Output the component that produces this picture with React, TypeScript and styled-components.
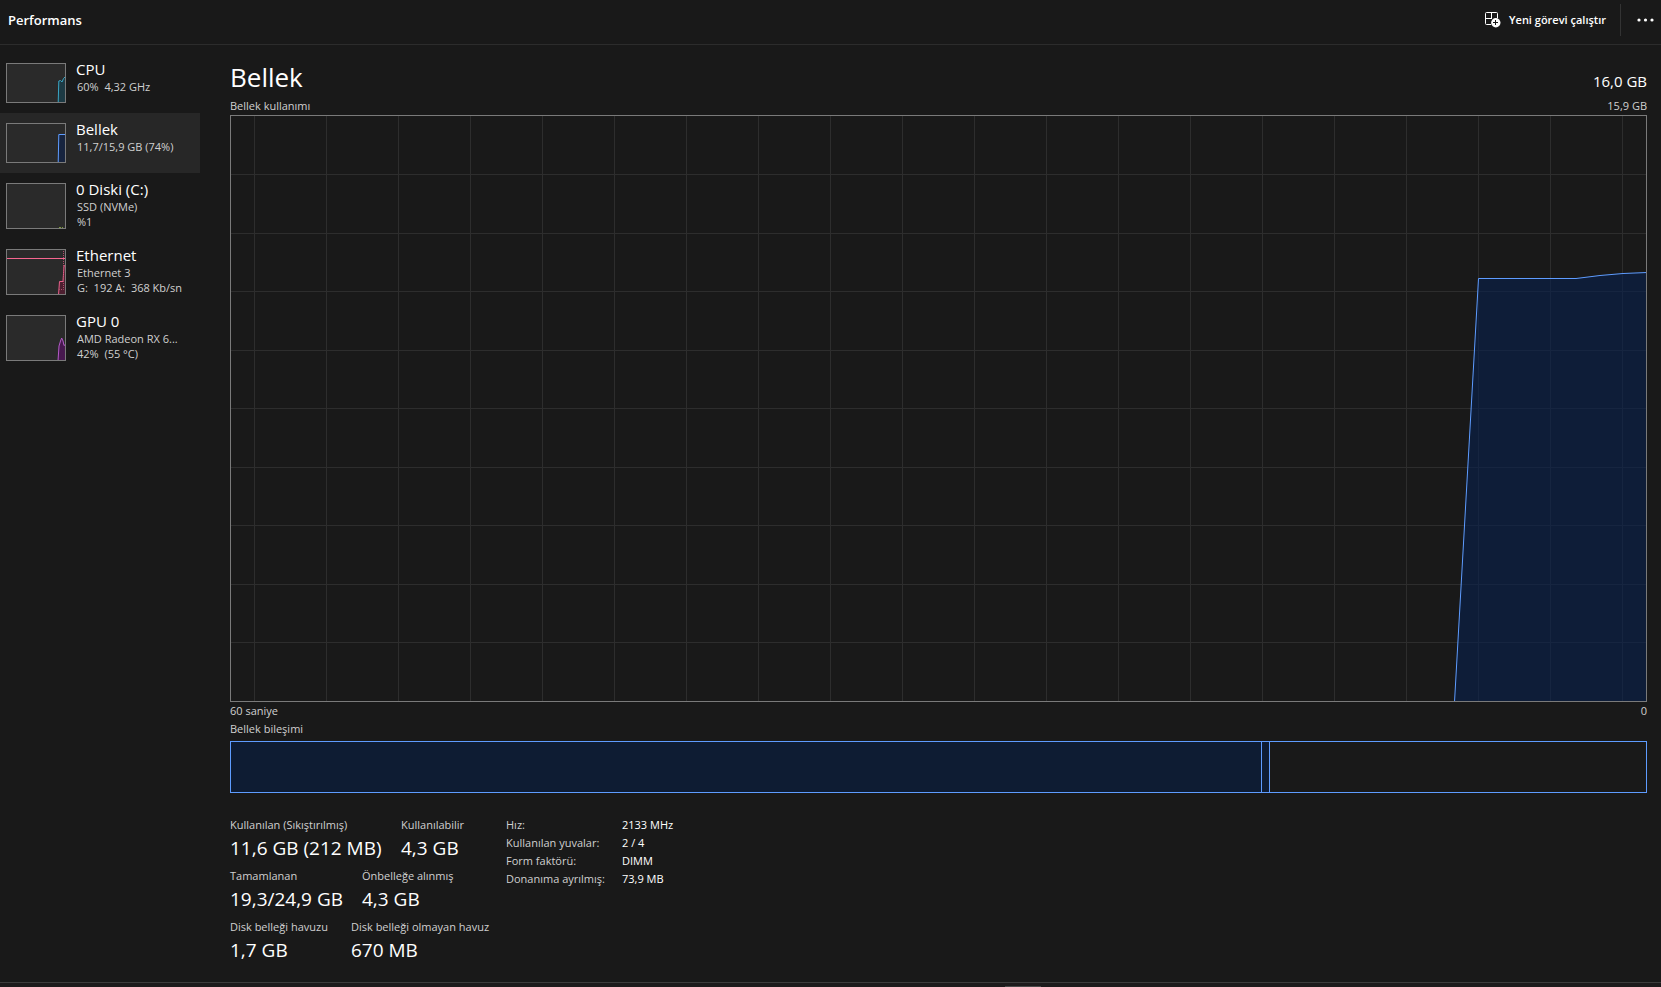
import React from "react";
import styled, { createGlobalStyle } from "styled-components";

const GlobalStyle = createGlobalStyle`
  *, *::before, *::after { box-sizing: border-box; }
  body {
    margin: 0;
    background: #191919;
    color: #ffffff;
    font-family: "Open Sans", "Noto Sans", sans-serif;
    font-size: 12px;
    line-height: 16px;
  }
  button { font: inherit; color: inherit; background: none; border: 0; padding: 0; margin: 0; }
  h1, h2, p, dl, dd, dt, ul { margin: 0; padding: 0; font-weight: 400; }
`;

const Page = styled.div`
  min-height: 100vh;
  display: flex;
  flex-direction: column;
`;

const Header = styled.header`
  display: flex;
  align-items: center;
  height: 45px;
  padding: 0 0 4px 8px;
  border-bottom: 1px solid #2c2c2c;
`;

const PageTitle = styled.h1`
  flex: 1;
  font-size: 13px;
  font-weight: 600;
`;

const RunTask = styled.button`
  display: flex;
  align-items: center;
  gap: 8px;
  padding: 0 14px 0 8px;
  height: 32px;
  font-size: 11px;
  font-weight: 600;
`;

const HeaderRule = styled.span`
  width: 1px;
  height: 32px;
  background: #333333;
`;

const MoreButton = styled.button`
  display: grid;
  place-items: center;
  width: 40px;
  height: 32px;
  padding-left: 8px;
`;

const Body = styled.div`
  flex: 1;
  display: flex;
`;

const Sidebar = styled.nav`
  flex: none;
  width: 200px;
  padding-top: 8px;
`;

const SideItem = styled.button<{ $active?: boolean }>`
  display: flex;
  gap: 10px;
  width: 100%;
  padding: 10px 6px;
  text-align: left;
  background: ${(p) => (p.$active ? "#272727" : "transparent")};
`;

const Thumb = styled.svg`
  flex: none;
  border: 1px solid #7a7a7a;
  background: #2a2a2a;
`;

const SideText = styled.span`
  display: flex;
  flex-direction: column;
  min-width: 0;
  margin-top: -2px;
`;

const SideName = styled.span`
  font-size: 15px;
  line-height: 16px;
  margin-bottom: 2px;
`;

const SideLine = styled.span`
  padding-left: 1px;
  font-size: 11px;
  line-height: 15px;
  color: #d0d0d0;
  white-space: pre;
`;

const Main = styled.main`
  flex: 1;
  min-width: 0;
  display: flex;
  flex-direction: column;
  padding: 12px 14px 17px 30px;
`;

const TitleRow = styled.div`
  display: flex;
  align-items: baseline;
  justify-content: space-between;
  height: 40px;
  line-height: 40px;
`;

const Title = styled.h2`
  font-size: 26px;
`;

const Capacity = styled.span`
  font-size: 15px;
`;

const Caption = styled.div`
  display: flex;
  justify-content: space-between;
  font-size: 11px;
  line-height: 18px;
  color: #d0d0d0;
`;

const Chart = styled.svg`
  display: block;
  flex: 1 1 240px;
  width: 100%;
  min-height: 240px;
  border: 1px solid #7a7a7a;
`;

const Composition = styled.div`
  display: flex;
  height: 52px;
  margin-top: 3px;
  border: 1px solid #5e9cff;
`;

const Segment = styled.div<{ $share: number; $filled?: boolean }>`
  flex: ${(p) => p.$share} 1 0;
  background: ${(p) => (p.$filled ? "#0e1c33" : "transparent")};
  & + & { border-left: 1px solid #5e9cff; }
`;

const Details = styled.div`
  display: flex;
  margin-top: 23px;
`;

const StatRows = styled.div`
  width: 276px;
  display: flex;
  flex-direction: column;
  gap: 4px;
`;

const StatRow = styled.dl`
  display: flex;
  white-space: nowrap;
`;

const Stat = styled.div<{ $width?: number }>`
  flex: none;
  width: ${(p) => (p.$width ? `${p.$width}px` : "auto")};
`;

const StatLabel = styled.dt`
  font-size: 11px;
  line-height: 17px;
  color: #d0d0d0;
`;

const StatValue = styled.dd`
  font-size: 19px;
  line-height: 30px;
`;

const Specs = styled.table`
  align-self: flex-start;
  border-collapse: collapse;
  th, td {
    padding: 0;
    height: 18px;
    font-size: 11px;
    line-height: 18px;
    font-weight: 400;
    text-align: left;
    white-space: nowrap;
  }
  th { width: 116px; color: #d0d0d0; }
`;

const Footer = styled.footer`
  display: flex;
  align-items: flex-end;
  height: 5px;
  padding-left: 60.5%;
  border-top: 1px solid #3c3c3c;
  background: #1d1b1c;
`;

type Device = {
  name: string;
  lines: string[];
  height: number;
  active?: boolean;
  graph: React.ReactNode;
};

const devices: Device[] = [
  {
    name: "CPU",
    lines: ["60%  4,32 GHz"],
    height: 40,
    graph: (
      <path d="M51.2 39L51.8 17L53.5 16.5L55 18L56.5 14.5L58.5 12.5V39" fill="#1c3a44" stroke="#3aa5c4" />
    ),
  },
  {
    name: "Bellek",
    lines: ["11,7/15,9 GB (74%)"],
    height: 40,
    active: true,
    graph: <path d="M51.2 39L51.8 10.5H59V39" fill="#17243f" stroke="#5e9cff" />,
  },
  {
    name: "0 Diski (C:)",
    lines: ["SSD (NVMe)", "%1"],
    height: 46,
    graph: <path d="M52 43.5H54M55 43.5H56" fill="none" stroke="#7d9a3c" />,
  },
  {
    name: "Ethernet",
    lines: ["Ethernet 3", "G:  192 A:  368 Kb/sn"],
    height: 46,
    graph: (
      <>
        <path d="M51.5 45L52.5 31.5H56L57 16L59 15V45" fill="#4d1f30" stroke="#e8608a" />
        <path d="M52 39.5H56.5V0" fill="none" stroke="#b34d6c" strokeDasharray="1 1" />
        <path d="M0 8.5H58" fill="none" stroke="#f5668f" />
      </>
    ),
  },
  {
    name: "GPU 0",
    lines: ["AMD Radeon RX 6...", "42%  (55 °C)"],
    height: 46,
    graph: (
      <path d="M51 45L52 30L53.5 25L54.7 22L56 25L57 29.5L59 28V45" fill="#47184f" stroke="#b45ac8" />
    ),
  },
];

const columns = Array.from({ length: 20 }, (_, i) => 23 + 72 * i);
const rows = Array.from({ length: 9 }, (_, i) => Math.floor(58.5 * (i + 1)));
const usage = "M1223.5 586L1247.5 162.5H1345L1369 159.5L1392 157.5L1416 156.5";

function MemoryChart() {
  return (
    <Chart viewBox="0 0 1415 585" preserveAspectRatio="none" role="img" aria-label="Bellek kullanımı">
      <g stroke="#2d2d2d">
        {columns.map((x) => (
          <path key={x} d={`M${x + 0.5} 0V585`} vectorEffect="non-scaling-stroke" />
        ))}
        {rows.map((y) => (
          <path key={y} d={`M0 ${y + 0.5}H1415`} vectorEffect="non-scaling-stroke" />
        ))}
      </g>
      <path d={`${usage}V586Z`} fill="#06204d" fillOpacity="0.6" />
      <path d={usage} fill="none" stroke="#5e9cff" vectorEffect="non-scaling-stroke" />
    </Chart>
  );
}

function RunTaskIcon() {
  return (
    <svg width="16" height="16" viewBox="0 0 16 16" fill="none" aria-hidden="true">
      <path
        d="M6 12.5H1.5A1 1 0 0 1 .5 11.5V1.5A1 1 0 0 1 1.5 .5H11.5A1 1 0 0 1 12.5 1.5V6M6.5 .5V6.5M.5 6.5H7"
        stroke="#fff"
      />
      <circle cx="10.8" cy="10.8" r="4.7" fill="#fff" />
      <path d="M10.5 8V13M8 10.5H13" stroke="#191919" />
    </svg>
  );
}

const stats: { label: string; value: string; width?: number }[][] = [
  [
    { label: "Kullanılan (Sıkıştırılmış)", value: "11,6 GB (212 MB)", width: 171 },
    { label: "Kullanılabilir", value: "4,3 GB" },
  ],
  [
    { label: "Tamamlanan", value: "19,3/24,9 GB", width: 132 },
    { label: "Önbelleğe alınmış", value: "4,3 GB" },
  ],
  [
    { label: "Disk belleği havuzu", value: "1,7 GB", width: 121 },
    { label: "Disk belleği olmayan havuz", value: "670 MB" },
  ],
];

const specs = [
  ["Hız:", "2133 MHz"],
  ["Kullanılan yuvalar:", "2 / 4"],
  ["Form faktörü:", "DIMM"],
  ["Donanıma ayrılmış:", "73,9 MB"],
];

export default function App() {
  return (
    <Page>
      <GlobalStyle />
      <Header>
        <PageTitle>Performans</PageTitle>
        <RunTask>
          <RunTaskIcon />
          Yeni görevi çalıştır
        </RunTask>
        <HeaderRule />
        <MoreButton aria-label="Diğer">
          <svg width="17" height="4" viewBox="0 0 17 4" fill="#fff" aria-hidden="true">
            <circle cx="2" cy="2" r="1.6" />
            <circle cx="8.5" cy="2" r="1.6" />
            <circle cx="15" cy="2" r="1.6" />
          </svg>
        </MoreButton>
      </Header>
      <Body>
        <Sidebar>
          {devices.map((d) => (
            <SideItem key={d.name} $active={d.active}>
              <Thumb width="60" height={d.height} viewBox={`0 0 58 ${d.height - 2}`} aria-hidden="true">
                {d.graph}
              </Thumb>
              <SideText>
                <SideName>{d.name}</SideName>
                {d.lines.map((line) => (
                  <SideLine key={line}>{line}</SideLine>
                ))}
              </SideText>
            </SideItem>
          ))}
        </Sidebar>
        <Main>
          <TitleRow>
            <Title>Bellek</Title>
            <Capacity>16,0 GB</Capacity>
          </TitleRow>
          <Caption>
            <span>Bellek kullanımı</span>
            <span>15,9 GB</span>
          </Caption>
          <MemoryChart />
          <Caption>
            <span>60 saniye</span>
            <span>0</span>
          </Caption>
          <Caption>
            <span>Bellek bileşimi</span>
          </Caption>
          <Composition>
            <Segment $share={1030} $filled />
            <Segment $share={7} $filled />
            <Segment $share={376} />
          </Composition>
          <Details>
            <StatRows>
              {stats.map((row) => (
                <StatRow key={row[0].label}>
                  {row.map((s) => (
                    <Stat key={s.label} $width={s.width}>
                      <StatLabel>{s.label}</StatLabel>
                      <StatValue>{s.value}</StatValue>
                    </Stat>
                  ))}
                </StatRow>
              ))}
            </StatRows>
            <Specs>
              <tbody>
                {specs.map(([label, value]) => (
                  <tr key={label}>
                    <th scope="row">{label}</th>
                    <td>{value}</td>
                  </tr>
                ))}
              </tbody>
            </Specs>
          </Details>
        </Main>
      </Body>
      <Footer>
        <svg width="36" height="1" viewBox="0 0 36 1" aria-hidden="true">
          <path d="M0 .5H36" stroke="#4a4a4a" />
        </svg>
      </Footer>
    </Page>
  );
}
